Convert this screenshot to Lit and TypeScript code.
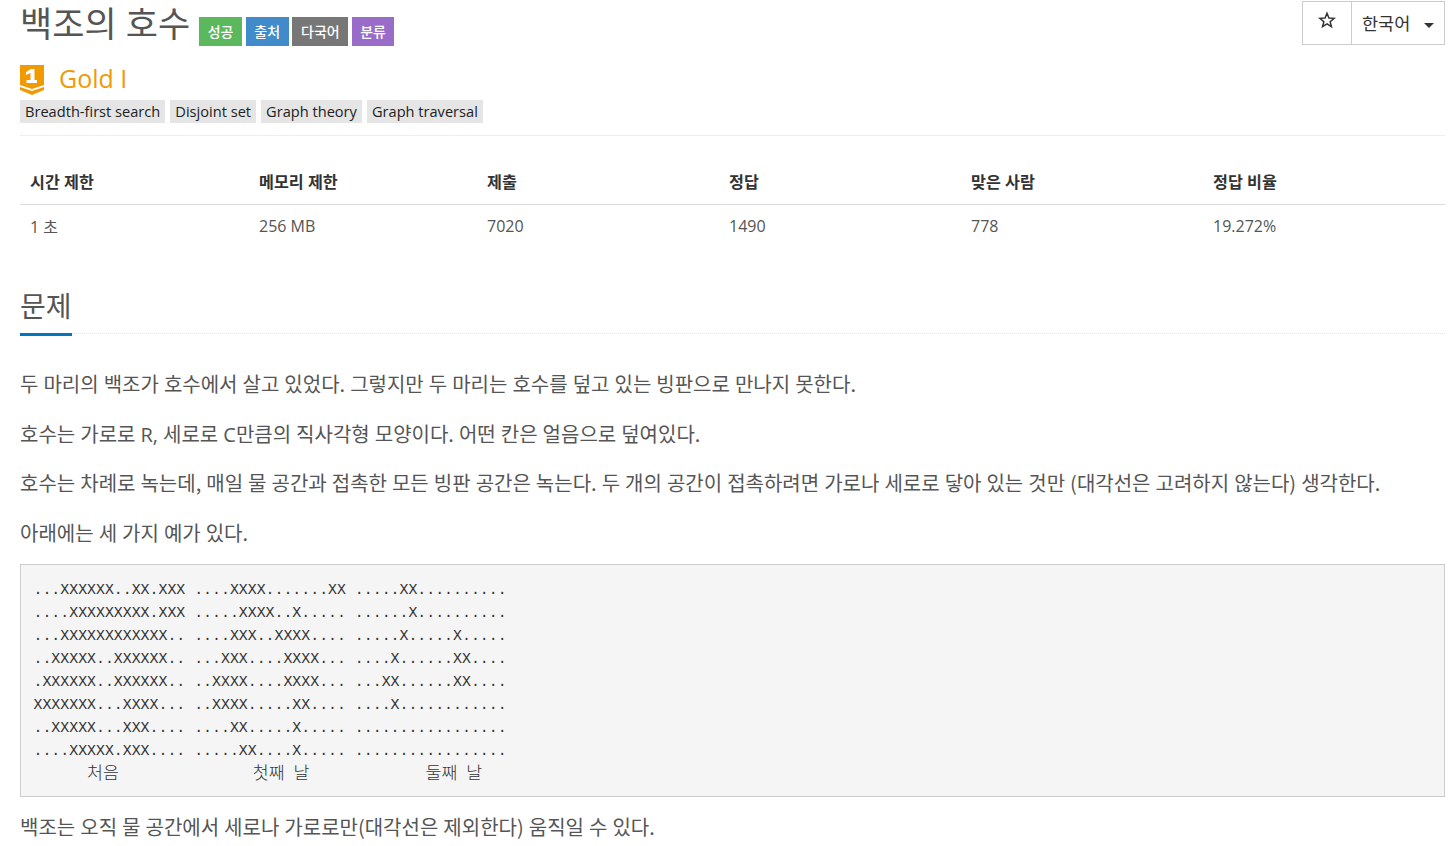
import { LitElement, html, css } from "lit";
import { customElement } from "lit/decorators.js";

const preTop = `...XXXXXX..XX.XXX ....XXXX.......XX .....XX..........
....XXXXXXXXX.XXX .....XXXX..X..... ......X..........
...XXXXXXXXXXXX.. ....XXX..XXXX.... .....X.....X.....
..XXXXX..XXXXXX.. ...XXX....XXXX... ....X......XX....
.XXXXXX..XXXXXX.. ..XXXX....XXXX... ...XX......XX....
XXXXXXX...XXXX... ..XXXX.....XX.... ....X............
..XXXXX...XXX.... ....XX.....X..... .................
....XXXXX.XXX.... .....XX....X..... .................
`;

@customElement("app-root")
export class AppRoot extends LitElement {
  static styles = css`
    :host { display: block; font-family: "Open Sans", "Noto Sans CJK KR", sans-serif; color: #333; background: #fff; height: 846px; overflow: hidden; padding: 0 10px 0 20px; box-sizing: border-box; }
    .head { display: flex; align-items: flex-start; height: 45px; margin-bottom: 16px; }
    h1 { margin: 0; font-size: 35px; line-height: 47px; font-weight: 400; color: #555; }
    .labels { display: flex; gap: 3.670px; margin: 17px 0 0 9px; }
    .label { height: 29px; display: flex; align-items: center; justify-content: center; font-size: 14px; font-weight: 500; padding-bottom: 2px; color: #fff; box-sizing: border-box; }
    .green { background: #5cb85c; width: 43px; } .blue { background: #428bca; width: 43px; } .gray { background: #777; width: 56px; } .purple { background: #9a6cca; width: 42px; }
    .btns { margin-left: auto; display: flex; margin-top: 1px; border: 1px solid #ccc; box-sizing: border-box; height: 44px; font-size: 17.500px; }
    .star { width: 49px; display: flex; align-items: flex-start; justify-content: center; padding-top: 9px; box-sizing: border-box; border-right: 1px solid #ccc; }
    .lang { width: 92px; display: flex; align-items: center; padding-left: 10px; padding-bottom: 2px; box-sizing: border-box; gap: 14px; color: #333; }
    .caret { width: 0; height: 0; border-left: 5px solid transparent; border-right: 5px solid transparent; border-top: 5px solid #333; margin-top: 6px; }
    .tier { display: flex; align-items: center; height: 34px; color: #f09a00; font-size: 25px; gap: 15px; }
    .tier svg { margin-top: 3px; }
    .tags { display: flex; gap: 5px; margin-top: 5px; }
    .tag { background: #e5e5e5; height: 23px; line-height: 23px; padding: 0 5px; font-size: 14.620px; color: #222; }
    .rule { border-top: 1px solid #eee; margin-top: 12px; }
    table { width: 100%; border-collapse: collapse; margin-top: 23px; font-size: 16px; }
    th { text-align: left; font-size: 16.200px; font-weight: 700; color: #333; padding: 0 10px; height: 45px; border-bottom: 1px solid #ddd; box-sizing: border-box; }
    td { padding: 0 10px 3px; height: 46px; color: #555; box-sizing: border-box; }
    .sec { margin-top: 30px; height: 54px; border-bottom: 1px dotted #e5e5e5; box-sizing: border-box; }
    h2 { margin: 0; display: inline-block; font-size: 28px; font-weight: 400; color: #555; line-height: 52px; height: 56px; box-sizing: border-box; border-bottom: 3px solid #0076c0; }
    .body { font-size: 20px; color: #555; font-family: "Noto Sans CJK KR", sans-serif; word-spacing: 0.550px; }
    p { margin: 0 0 13.600px; height: 36px; line-height: 36px; white-space: nowrap; }
    .body p:first-child { margin-top: 32px; }
    .lat { font-family: "Open Sans", sans-serif; }
    pre { margin: 3px 0 12px; background: #f5f5f5; border: 1px solid #ccc; height: 233px; box-sizing: border-box; padding: 14px 12.500px; font-family: "Liberation Mono", monospace; font-size: 14.880px; line-height: 23px; color: #333; overflow: hidden; word-spacing: 0; }
    .ko { font-family: "Noto Sans CJK KR", sans-serif; font-size: 17.300px; line-height: 1; font-weight: 300; }
  `;
  render() {
    return html`
      <div class="head">
        <h1>백조의 호수</h1>
        <div class="labels">
          <span class="label green">성공</span>
          <span class="label blue">출처</span>
          <span class="label gray">다국어</span>
          <span class="label purple">분류</span>
        </div>
        <div class="btns">
          <div class="star">
            <svg width="18" height="18" viewBox="0 0 24 24" fill="none" stroke="#333" stroke-width="2" stroke-linejoin="miter"><path d="M12 3l2.600 6.300 6.900.5-5.300 4.400 1.700 6.700L12 17.300l-5.900 3.600 1.700-6.700L2.500 9.800l6.900-.5z"/></svg>
          </div>
          <div class="lang">한국어 <span class="caret"></span></div>
        </div>
      </div>
      <div class="tier">
        <svg width="24" height="30" viewBox="0 0 24 30">
          <path d="M0 0h24v20l-12 4-12-4z" fill="#f09a00"/>
          <path d="M0 22l12 4 12-4v3l-12 5-12-5z" fill="#f09a00"/>
          <path d="M6 7l5-3h3.500v11H17v3H6.500v-3H10.500V8L6 10z" fill="#fff"/>
        </svg>
        <span>Gold I</span>
      </div>
      <div class="tags">
        <span class="tag">Breadth-first search</span>
        <span class="tag">Disjoint set</span>
        <span class="tag">Graph theory</span>
        <span class="tag">Graph traversal</span>
      </div>
      <div class="rule"></div>
      <table>
        <colgroup><col style="width:229px"/><col style="width:228px"/><col style="width:242px"/><col style="width:242px"/><col style="width:242px"/><col/></colgroup>
        <thead><tr><th>시간 제한</th><th>메모리 제한</th><th>제출</th><th>정답</th><th>맞은 사람</th><th>정답 비율</th></tr></thead>
        <tbody><tr><td>1 초</td><td>256 MB</td><td>7020</td><td>1490</td><td>778</td><td>19.272%</td></tr></tbody>
      </table>
      <div class="sec"><h2>문제</h2></div>
      <div class="body">
        <p>두 마리의 백조가 호수에서 살고 있었다. 그렇지만 두 마리는 호수를 덮고 있는 빙판으로 만나지 못한다.</p>
        <p>호수는 가로로 <span class="lat">R,</span> 세로로 <span class="lat">C</span>만큼의 직사각형 모양이다. 어떤 칸은 얼음으로 덮여있다.</p>
        <p>호수는 차례로 녹는데, 매일 물 공간과 접촉한 모든 빙판 공간은 녹는다. 두 개의 공간이 접촉하려면 가로나 세로로 닿아 있는 것만 (대각선은 고려하지 않는다) 생각한다.</p>
        <p>아래에는 세 가지 예가 있다.</p>
        <pre>${preTop}      <span class="ko">처음</span>               <span class="ko">첫째</span> <span class="ko">날</span>             <span class="ko">둘째</span> <span class="ko">날</span></pre>
        <p>백조는 오직 물 공간에서 세로나 가로로만(대각선은 제외한다) 움직일 수 있다.</p>
      </div>
    `;
  }
}
